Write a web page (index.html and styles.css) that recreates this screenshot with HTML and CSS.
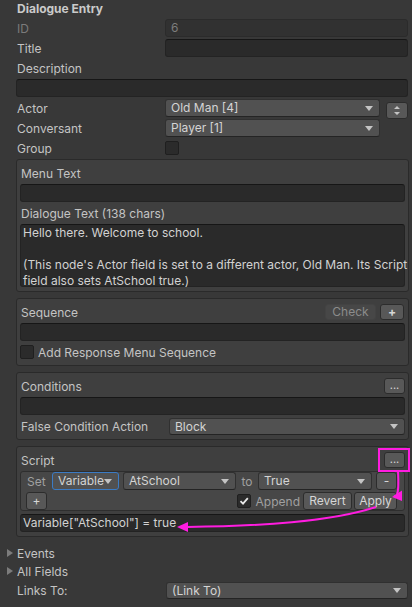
FILE: index.html
```html
<!DOCTYPE html>
<html>
<head>
<meta charset="utf-8">
<link rel="stylesheet" href="styles.css">
</head>
<body>
<div class="inspector">
  <div class="title">Dialogue Entry</div>
  <div class="row top"><span class="label dim">ID</span><div class="field disabled">6</div></div>
  <div class="row top"><span class="label">Title</span><div class="field"></div></div>
  <div class="row top"><span class="label">Description</span></div>
  <div class="row top"><div class="field"></div></div>
  <div class="row top"><span class="label">Actor</span><div class="dropdown w215">Old Man [4]</div>
    <div class="stepper"><svg width="8" height="11" viewBox="0 0 8 11"><path d="M4 1 L7 4 L1 4 Z M1 7 L7 7 L4 10 Z" fill="#c4c4c4"/></svg></div>
  </div>
  <div class="row top"><span class="label">Conversant</span><div class="dropdown w215">Player [1]</div></div>
  <div class="row top"><span class="label">Group</span><div class="check"></div></div>

  <div class="box first">
    <div class="row"><span class="label">Menu Text</span></div>
    <div class="field"></div>
    <div class="row"><span class="label">Dialogue Text (138 chars)</span></div>
    <div class="field area">
      <div class="line">Hello there. Welcome to school.</div>
      <div class="line">&nbsp;</div>
      <div class="line">(This node's Actor field is set to a different actor, Old Man. Its Script</div>
      <div class="line">field also sets AtSchool true.)</div>
    </div>
  </div>

  <div class="box">
    <div class="row"><span class="label">Sequence</span><span class="spacer"></span><div class="btn muted wcheck">Check</div><div class="btn wplus">+</div></div>
    <div class="field"></div>
    <div class="row"><div class="check"></div><span class="checklabel">Add Response Menu Sequence</span></div>
  </div>

  <div class="box">
    <div class="row"><span class="label">Conditions</span><span class="spacer"></span><div class="btn wdots">...</div></div>
    <div class="field"></div>
    <div class="row"><span class="label">False Condition Action</span><div class="dropdown grow short">Block</div></div>
  </div>

  <div class="box">
    <div class="row"><span class="label">Script</span><span class="spacer"></span><div class="btn wdots">...</div></div>
    <div class="panel">
      <div class="prow">
        <span class="dimlabel wset">Set</span>
        <div class="dropdown focus wvar">Variable</div>
        <div class="dropdown wat">AtSchool</div>
        <span class="dimlabel wto">to</span>
        <div class="dropdown wtrue">True</div>
        <div class="btn wminus tall">-</div>
      </div>
      <div class="prow">
        <div class="btn wminus tall">+</div>
        <span class="spacer"></span>
        <div class="check checked"><svg width="12" height="12" viewBox="0 0 12 12"><path d="M2.5 6.2 L5 8.6 L9.8 3.2" fill="none" stroke="#e8e8e8" stroke-width="1.8"/></svg></div>
        <span class="dimlabel append">Append</span>
        <div class="btn tall wrevert">Revert</div>
        <div class="btn tall wapply">Apply</div>
      </div>
    </div>
    <div class="field output">Variable["AtSchool"] = true</div>
  </div>

  <div class="foldout first-fold"><span class="tri"></span><span>Events</span></div>
  <div class="foldout"><span class="tri"></span><span>All Fields</span></div>
  <div class="row top links"><span class="label lwide">Links To:</span><div class="dropdown grow short">(Link To)</div></div>
</div>

<svg class="annot" width="412" height="607" viewBox="0 0 412 607">
  <rect x="379" y="449" width="30" height="22" fill="none" stroke="#ff1ce0" stroke-width="2"/>
  <path d="M398 471 C398.5 480 399 490 397 494.5 C396.5 495.5 396 496 394 496.5" fill="none" stroke="#ff1ce0" stroke-width="2"/>
  <polygon points="392,497 402,490.5 402,501" fill="#ff1ce0"/>
  <path d="M376 507 C330 522 260 526 187 527" fill="none" stroke="#ff1ce0" stroke-width="2"/>
  <polygon points="177,527 188,522 188,532" fill="#ff1ce0"/>
</svg>
</body>
</html>
```

FILE: styles.css
```css
* { box-sizing: border-box; }
html, body { margin: 0; padding: 0; }
body {
  background: #383838;
  font-family: Inter, "Noto Sans", sans-serif;
  font-size: 12px;
  color: #c4c4c4;
  width: 412px;
  height: 607px;
  overflow: hidden;
  position: relative;
}
.inspector {
  margin-left: 16px;
  width: 393px;
  display: flex;
  flex-direction: column;
}
.title {
  height: 17px;
  line-height: 17px;
  font-weight: 700;
  padding-left: 1px;
  color: #cacaca;
  flex: none;
}
.row {
  display: flex;
  align-items: center;
  height: 18px;
  flex: none;
}
.row.top { margin-top: 2px; padding-right: 1px; }
.label {
  width: 149px;
  flex: none;
  padding-left: 1px;
  white-space: nowrap;
}
.label.lwide { width: 150px; }
.label.dim { color: #7b7b7b; }
.spacer { flex: 1; }
.field {
  flex: 1;
  height: 18px;
  background: #2a2a2a;
  border: 1px solid #232323;
  border-top-color: #161616;
  border-radius: 3px;
  line-height: 16px;
  padding-left: 2px;
  color: #d2d2d2;
  white-space: nowrap;
}
.box > .field { flex: none; }
.field.disabled {
  background: #313131;
  border-color: #2b2b2b;
  color: #7d7d7d;
  padding-left: 5px;
}
.field.area {
  height: 63px;
  line-height: 16px;
  padding-top: 0;
}
.field.output { margin-top: 1px; }
.line { white-space: nowrap; }
.dropdown {
  position: relative;
  height: 18px;
  line-height: 16px;
  background: #515151;
  border: 1px solid #303030;
  border-bottom-color: #242424;
  border-radius: 3px;
  padding-left: 5px;
  color: #d4d4d4;
  white-space: nowrap;
  flex: none;
}
.dropdown::after {
  content: "";
  position: absolute;
  right: 6px;
  top: 6px;
  border-left: 4px solid transparent;
  border-right: 4px solid transparent;
  border-top: 5px solid #c4c4c4;
}
.dropdown.short { height: 17px; line-height: 15px; }
.dropdown.short::after { top: 5px; }
.dropdown.focus { border-color: #3b7bc4; }
.dropdown.grow { flex: 1; }
.w215 { width: 215px; }
.stepper {
  width: 22px;
  height: 17px;
  margin-left: 6px;
  margin-top: 4px;
  background: #585858;
  border: 1px solid #2c2c2c;
  border-radius: 3px;
  display: flex;
  align-items: center;
  justify-content: center;
}
.check {
  width: 14px;
  height: 14px;
  flex: none;
  background: #2b2b2b;
  border: 1px solid #1f1f1f;
  border-radius: 2px;
  display: flex;
  align-items: center;
  justify-content: center;
}
.checklabel { margin-left: 4px; white-space: nowrap; }
.box {
  margin-top: 6px;
  background: #3f3f3f;
  border: 1px solid #2a2a2a;
  border-radius: 3px;
  padding: 4px 3px;
  display: flex;
  flex-direction: column;
  gap: 2px;
  flex: none;
}
.box.first { margin-top: 2px; }
.btn {
  height: 16px;
  line-height: 14px;
  background: #585858;
  border: 1px solid #2c2c2c;
  border-radius: 3px;
  text-align: center;
  color: #d6d6d6;
  flex: none;
  white-space: nowrap;
}
.btn.tall { height: 18px; line-height: 16px; }
.btn.muted { background: #474747; border-color: #434343; color: #8c8c8c; }
.wcheck { width: 51px; margin-right: 4px; }
.wplus { width: 24px; margin-right: 1px; font-weight: 700; }
.wdots { width: 21px; font-size: 11px; line-height: 12px; }
.panel {
  height: 40px;
  background: #474747;
  border: 1px solid #2e2e2e;
  border-radius: 3px;
  padding: 0 7px 0 5px;
  display: flex;
  flex-direction: column;
  gap: 2px;
  flex: none;
}
.prow {
  display: flex;
  align-items: center;
  height: 18px;
  gap: 4px;
  flex: none;
}
.dimlabel { color: #a0a0a0; white-space: nowrap; flex: none; }
.wset { width: 22px; padding-left: 1px; }
.wvar { width: 67px; }
.wat { width: 113px; }
.wto { width: 14px; text-align: center; }
.wtrue { width: 114px; }
.wminus { width: 21px; }
.append { margin-left: 1px; margin-right: -1px; }
.wrevert { width: 49px; }
.wapply { width: 43px; margin-left: -2px; }
.foldout {
  display: flex;
  align-items: center;
  height: 18px;
  margin-left: -9px;
  gap: 4px;
  flex: none;
}
.foldout.first-fold { margin-top: 7px; }
.tri {
  width: 0;
  height: 0;
  border-top: 4px solid transparent;
  border-bottom: 4px solid transparent;
  border-left: 6px solid #7c7c7c;
  flex: none;
}
.row.links { margin-top: 1px; }
.annot { position: absolute; left: 0; top: 0; pointer-events: none; }
```
